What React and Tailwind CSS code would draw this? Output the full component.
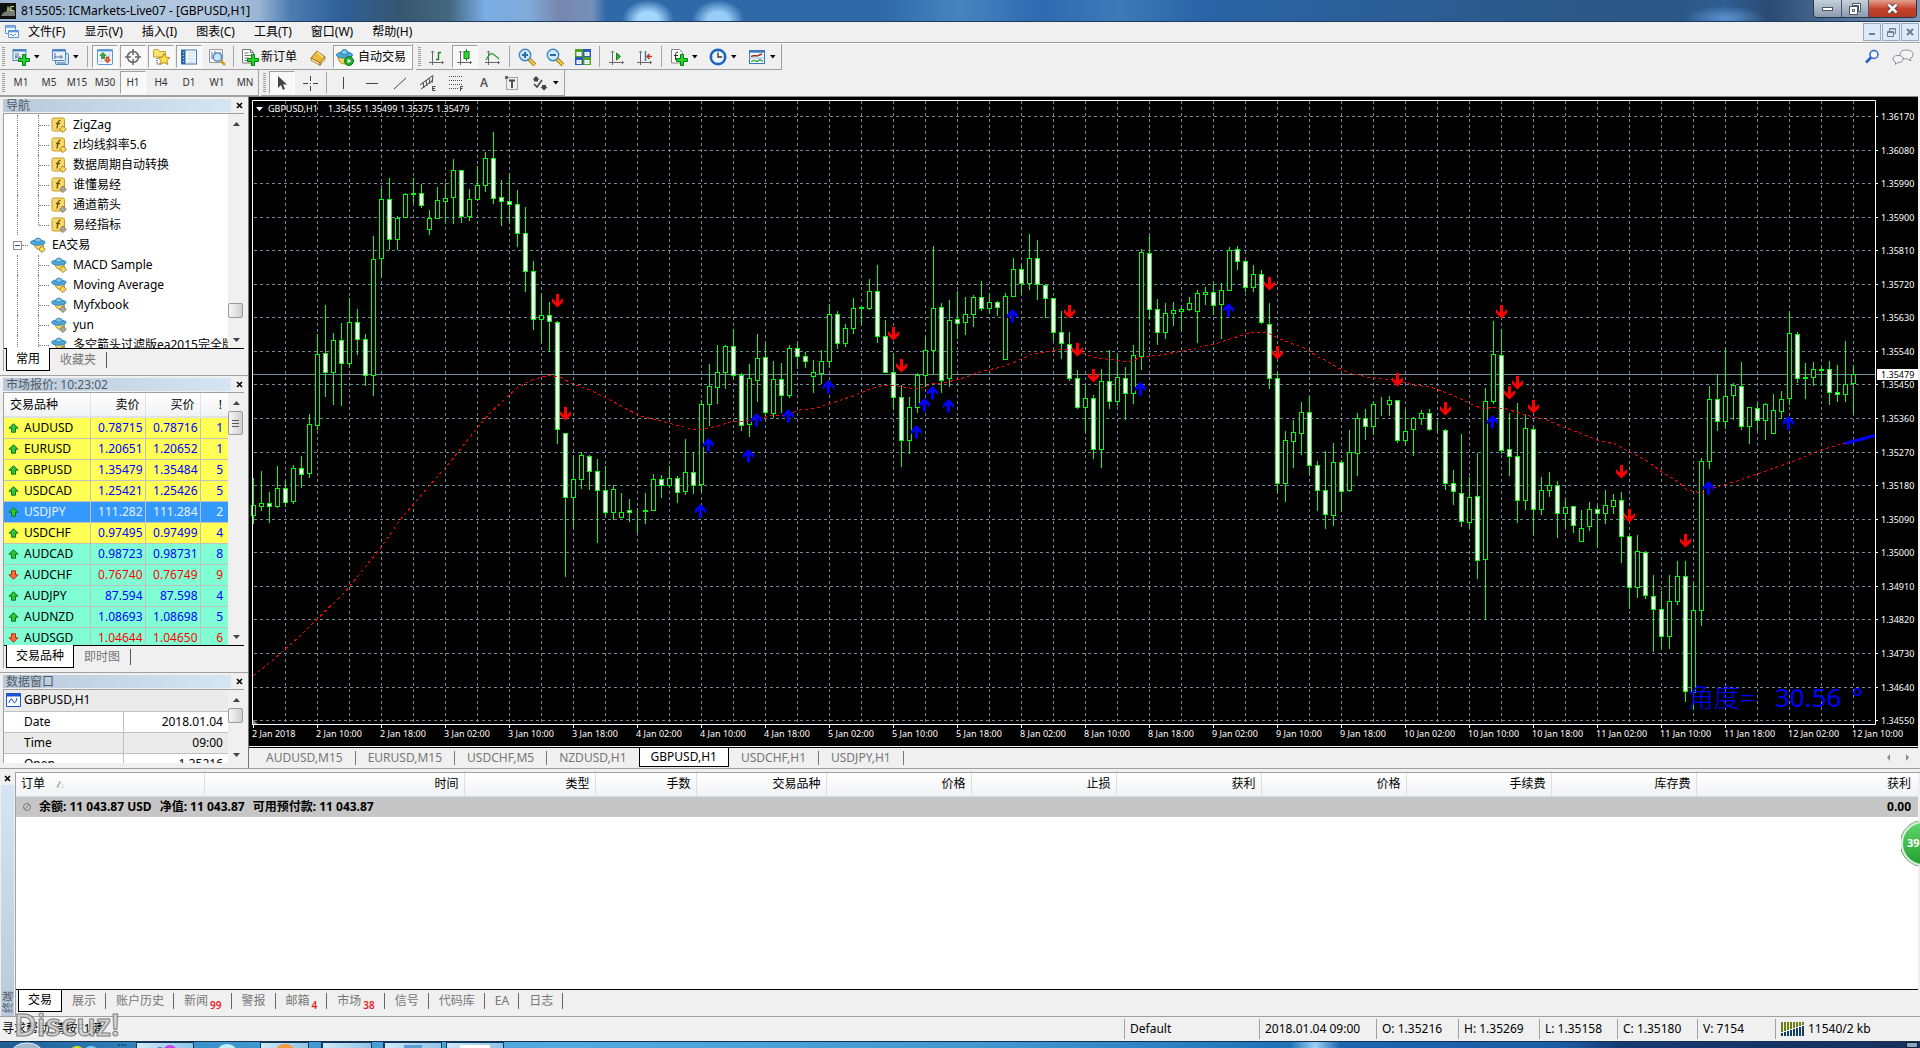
import React from 'react';

// [high, body top, body bottom, low, 1 = falling (filled) / 0 = rising (hollow)]
const candles = [
  [478,505,516,524,0],[471,503,507,511,0],[492,503,507,523,1],[466,488,507,508,0],[480,488,503,507,1],
  [465,468,502,504,0],[456,468,475,488,1],[414,424,474,478,0],[334,354,426,430,0],[305,353,373,397,1],
  [333,340,373,405,0],[323,340,364,406,1],[298,322,364,368,0],[309,322,340,355,1],[334,339,376,386,1],
  [236,259,376,396,0],[188,199,259,278,0],[178,199,240,250,1],[216,218,240,250,0],[193,194,218,218,0],
  [178,193,195,203,1],[184,193,206,208,1],[210,218,230,235,0],[187,200,219,219,0],[183,198,202,223,0],
  [159,170,198,224,0],[170,170,217,223,1],[189,199,217,221,0],[166,185,200,201,0],[152,158,186,192,0],
  [132,158,199,204,1],[180,197,202,226,1],[174,201,205,223,1],[190,204,234,247,1],[207,233,272,292,1],
  [261,271,320,330,1],[294,315,320,343,0],[302,315,322,352,1],[321,322,430,444,1],[433,433,498,577,1],
  [456,479,498,529,0],[452,455,480,489,0],[455,456,472,490,1],[459,471,491,543,1],[466,490,513,517,1],
  [485,489,513,520,0],[493,512,518,518,0],[499,510,513,522,1],[508,512,513,533,0],[493,510,512,524,1],
  [474,479,511,511,0],[475,479,486,498,1],[466,478,486,487,0],[476,478,493,503,1],[439,472,492,495,0],
  [452,472,486,494,1],[400,404,485,492,0],[364,386,405,426,0],[345,372,388,404,0],[345,346,373,389,0],
  [329,346,376,379,1],[373,375,426,431,1],[364,378,425,437,0],[334,358,381,402,0],[343,357,413,416,1],
  [361,379,414,418,0],[363,379,396,413,1],[345,348,396,398,0],[343,348,357,369,1],[352,356,362,368,1],
  [360,372,377,393,0],[350,361,374,384,0],[304,314,362,368,0],[311,314,344,349,1],[324,328,344,347,0],
  [298,308,329,334,0],[306,307,309,325,1],[279,291,309,310,0],[265,291,337,343,1],[320,336,373,373,1],
  [353,372,398,410,1],[385,397,441,467,1],[397,407,441,454,0],[373,375,408,413,0],[337,350,376,387,0],
  [246,308,351,374,0],[303,307,381,393,1],[300,320,379,387,0],[291,319,324,339,1],[297,314,323,335,0],
  [295,297,315,327,0],[281,297,309,311,1],[293,302,309,314,0],[301,302,308,316,1],[293,296,360,360,0],
  [258,269,297,297,0],[264,269,284,294,1],[234,258,284,290,0],[240,258,285,300,1],[284,285,299,318,1],
  [298,298,333,341,1],[311,332,344,359,1],[332,344,379,381,1],[370,378,408,409,1],[385,398,408,433,0],
  [395,398,450,459,1],[369,381,450,468,0],[350,381,402,409,1],[353,377,402,406,0],[367,378,394,420,1],
  [345,355,394,404,0],[249,252,357,370,0],[236,253,310,319,1],[299,309,333,345,1],[303,313,333,339,0],
  [302,310,314,326,0],[306,309,312,331,0],[297,303,310,311,0],[290,293,312,343,0],[287,292,295,305,0],
  [283,292,306,315,1],[283,290,305,339,0],[247,250,291,291,0],[246,249,262,270,1],[260,261,288,292,1],
  [265,274,288,292,0],[270,274,323,324,1],[303,324,379,389,1],[372,378,484,493,1],[431,440,484,502,0],
  [420,432,442,468,0],[402,412,434,455,0],[396,412,466,474,1],[461,465,491,511,1],[451,490,515,529,1],
  [443,462,516,526,0],[460,462,492,512,1],[430,452,491,492,0],[413,418,454,476,0],[409,418,427,440,1],
  [401,404,427,435,0],[397,405,406,416,0],[396,400,405,416,0],[400,400,441,443,1],[410,431,441,446,0],
  [417,418,430,456,0],[410,413,419,425,0],[409,413,430,431,1],[422,430,431,433,0],[429,430,484,490,1],
  [470,483,492,505,1],[434,493,522,527,1],[477,497,523,528,0],[453,496,561,579,1],[388,401,560,620,0],
  [321,354,402,404,0],[329,355,451,454,1],[413,449,457,476,1],[403,456,501,523,1],[414,428,501,510,0],
  [426,429,510,535,1],[477,490,510,515,0],[472,485,491,497,0],[481,485,514,538,1],[499,507,514,528,0],
  [506,506,526,533,1],[510,528,542,542,0],[502,509,527,531,0],[505,509,514,547,1],[490,505,514,524,0],
  [494,500,507,514,0],[492,500,537,563,1],[536,536,588,609,1],[535,551,588,598,0],[551,552,596,599,1],
  [575,596,610,652,1],[591,609,637,649,1],[575,601,637,649,0],[561,576,602,605,0],[561,576,692,702,1],
  [583,610,693,710,0],[458,461,611,626,0],[386,399,462,469,0],[374,399,422,431,1],[348,396,422,429,0],
  [383,385,396,420,0],[362,386,427,430,1],[407,407,427,444,0],[403,408,421,431,1],[403,404,421,440,0],
  [394,410,434,434,0],[391,399,412,419,0],[311,333,399,405,0],[332,334,379,383,1],[363,377,379,399,1],
  [362,369,378,386,0],[367,369,371,386,1],[361,369,393,405,1],[365,392,395,402,1],[341,384,395,402,0],
  [365,374,384,414,0],
];

const average =
  '253,676 273,660 300,636 345,592 362,571 380,549 400,520 428,487 451,461 470,437 489,414 503,401 517,388 532,380 549,375 560,377 573,384 590,390 606,398 623,407 640,416 657,420 680,426 692,429 703,429 718,426 733,421 745,421 770,416 785,415 800,410 817,408 835,402 853,396 870,389 885,385 898,386 910,388 920,388 932,384 944,383 963,378 980,372 1001,367 1015,362 1030,355 1050,351 1065,349 1078,351 1085,354 1097,358 1115,360 1127,362 1143,357 1160,355 1183,351 1200,347 1215,344 1230,339 1253,332 1268,333 1280,339 1293,344 1307,349 1316,356 1325,360 1338,368 1350,373 1367,377 1383,379 1400,381 1413,385 1430,387 1447,393 1463,400 1473,405 1484,409 1493,407 1507,409 1520,413 1530,416 1547,420 1563,427 1580,433 1597,440 1615,444 1630,452 1647,461 1662,472 1677,481 1687,490 1697,492 1704,492 1717,487 1740,480 1760,473 1777,467 1797,460 1813,453 1825,449 1845,443';

const sellArrows = [
  [557,294],[565,407],[893,327],[901,359],[1069,305],[1077,343],[1093,369],[1269,277],[1277,346],[1397,373],
  [1445,402],[1501,305],[1509,386],[1517,376],[1533,400],[1621,465],[1629,509],[1685,534],
];
const buyArrows = [
  [700,504],[708,438],[748,449],[756,413],[788,409],[828,380],[916,425],[924,398],[932,386],[948,399],
  [1012,309],[1140,382],[1228,303],[1492,415],[1708,481],[1788,416],
];

const times = [
  '2 Jan 2018', '2 Jan 10:00', '2 Jan 18:00', '3 Jan 02:00', '3 Jan 10:00', '3 Jan 18:00', '4 Jan 02:00',
  '4 Jan 10:00', '4 Jan 18:00', '5 Jan 02:00', '5 Jan 10:00', '5 Jan 18:00', '8 Jan 02:00', '8 Jan 10:00',
  '8 Jan 18:00', '9 Jan 02:00', '9 Jan 10:00', '9 Jan 18:00', '10 Jan 02:00', '10 Jan 10:00', '10 Jan 18:00',
  '11 Jan 02:00', '11 Jan 10:00', '11 Jan 18:00', '12 Jan 02:00', '12 Jan 10:00',
];

const quotes = [
  ['AUDUSD', '0.78715', '0.78716', '1', 'y', 1],
  ['EURUSD', '1.20651', '1.20652', '1', 'y', 1],
  ['GBPUSD', '1.35479', '1.35484', '5', 'y', 1],
  ['USDCAD', '1.25421', '1.25426', '5', 'y', 1],
  ['USDJPY', '111.282', '111.284', '2', 's', 1],
  ['USDCHF', '0.97495', '0.97499', '4', 'y', 1],
  ['AUDCAD', '0.98723', '0.98731', '8', 'g', 1],
  ['AUDCHF', '0.76740', '0.76749', '9', 'g', 0],
  ['AUDJPY', '87.594', '87.598', '4', 'g', 1],
  ['AUDNZD', '1.08693', '1.08698', '5', 'g', 1],
  ['AUDSGD', '1.04644', '1.04650', '6', 'g', 0],
];
const quoteBg = { y: 'bg-[#ffff55]', s: 'bg-[#3399ff]', g: 'bg-[#80ffd5]' };

/* ---------- icons ---------- */

const Svg = ({ size = 18, children }) => (
  <svg width={size} height={size} viewBox="0 0 18 18" fill="none" className="shrink-0" aria-hidden="true">
    {children}
  </svg>
);

const Plus = ({ x = 5, y = 5 }) => (
  <path
    transform={`translate(${x} ${y})`}
    d="M4.500.5h3v4h4v3h-4v4h-3v-4h-4v-3h4z"
    fill="#1fd62b"
    stroke="#0a7d12"
  />
);

const NewChartIcon = () => (
  <Svg>
    <rect x="1" y="1.500" width="13" height="11" fill="#e9f2fb" stroke="#4a86c5" />
    <path d="M1 2.500h13" stroke="#4a86c5" strokeWidth="2" />
    <path d="M4 5v6M3 9h6M6 5v3" stroke="#54779b" />
    <Plus x={6} y={6} />
  </Svg>
);
const ProfilesIcon = () => (
  <Svg>
    <rect x="4.500" y="5.500" width="13" height="11" rx="1" fill="#cfe2f5" stroke="#4a86c5" />
    <rect x="1.500" y="1.500" width="13" height="11" rx="1" fill="#e9f2fb" stroke="#4a86c5" />
    <path d="M1 2.500h14" stroke="#4a86c5" strokeWidth="2" />
    <path d="M4 5v6M3 9h9M10 7v4M6 15h9" stroke="#54779b" />
  </Svg>
);
const MarketIcon = () => (
  <Svg>
    <rect x="1.500" y="1.500" width="15" height="15" rx="1" fill="#f3f9ff" stroke="#5b9bd5" />
    <path d="M1 2.500h16" stroke="#5b9bd5" strokeWidth="2" />
    <path d="M4 6h2M11 6h4M11 8h4M3 13h4" stroke="#b9cfe4" />
    <path d="M7 4.500l3 3H8.500v3h-3v-3H4z" fill="#2fae34" stroke="#197a1d" strokeWidth=".7" />
    <path d="M11.500 15L8.500 12H10V9h3v3h1.500z" fill="#f0633a" stroke="#b33316" strokeWidth=".7" />
  </Svg>
);
const TargetIcon = () => (
  <Svg>
    <circle cx="9" cy="9" r="5.500" stroke="#666" strokeWidth="1.500" />
    <path d="M9 1v6M9 11v6M1 9h6M11 9h6" stroke="#666" strokeWidth="1.500" />
  </Svg>
);
const NavigatorIcon = () => (
  <Svg>
    <path d="M1.500 3q0-1.500 1.500-1.500h3l1.500 2h6V9h-12z" fill="#fbe278" stroke="#c9a02a" />
    <path d="M5 10v6M5 16h3" stroke="#333" strokeDasharray="1 1" />
    <path d="M12 5.500l1.800 3.700 4 .5-3 2.800.8 4-3.600-2-3.600 2 .8-4-3-2.800 4-.5z" fill="#ffe04d" stroke="#b98a14" />
  </Svg>
);
const TerminalIcon = () => (
  <Svg>
    <rect x="1.500" y="2" width="15" height="14" fill="#f4faff" stroke="#3a78b8" />
    <path d="M3.500 2v14" stroke="#2b66a8" strokeWidth="4" />
    <path d="M3.500 4v10" stroke="#b8dafc" strokeDasharray="1 2" />
    <path d="M8 5h7M8 8h7M8 11h7M8 14h7" stroke="#bcd3e8" />
  </Svg>
);
const TesterIcon = () => (
  <Svg>
    <path d="M1.500 1.500h13v13h-13z" fill="#f7f7f7" stroke="#999" />
    <path d="M4 4v7M7 3v6M12 4v6" stroke="#4e7cb0" />
    <circle cx="9.500" cy="9" r="4.200" fill="#bfe0fb" fillOpacity=".8" stroke="#4886c0" strokeWidth="1.300" />
    <path d="M12.500 12.500L17 17" stroke="#c9a02a" strokeWidth="2.500" />
  </Svg>
);
const OrderIcon = () => (
  <Svg>
    <path d="M1.500 1.500h8l3 3V15h-11z" fill="#fff" stroke="#777" />
    <path d="M9.500 1.500v3h3M3.500 5h4M3.500 7.500h7M3.500 10h4M3.500 12.500h3" stroke="#777" />
    <Plus x={6} y={6} />
  </Svg>
);
const BookIcon = () => (
  <Svg>
    <path d="M8 3l8 6-5 6-9-5z" fill="#e8b93c" stroke="#9a6b12" />
    <path d="M2 10l9 5v2.300l-9-5zM11 15l5-6v2.300l-5 6z" fill="#fff2c4" stroke="#9a6b12" strokeWidth=".8" />
    <path d="M8 4l6 5" stroke="#fbe494" strokeWidth="1.500" />
  </Svg>
);
const AutoIcon = () => (
  <Svg>
    <path d="M2 9q1 7 7 7t6-7z" fill="#f4d35e" stroke="#b88d1a" />
    <ellipse cx="8.500" cy="7" rx="8" ry="3" fill="#4fa8dc" stroke="#2a7aae" />
    <path d="M5 6q0-4.500 3.500-4.500T12 6q-3.500 1.500-7 0z" fill="#7cc5ee" stroke="#2a7aae" />
    <circle cx="13" cy="13" r="4.500" fill="#1fae2b" stroke="#0b7a17" />
    <path d="M11.700 10.700l3.600 2.300-3.600 2.300z" fill="#fff" />
  </Svg>
);
const Axes = () => (
  <path d="M4.500 3v14M1 14.500h14.500M3 4.500L4.500 3 6 4.500M14 13l1.500 1.500L14 16" stroke="#666" />
);
const BarsIcon = () => (
  <Svg>
    <Axes />
    <path d="M10.500 4v8M10.500 4.500H13M8 11.500h2.500" stroke="#15801c" strokeWidth="1.400" />
  </Svg>
);
const CandlesIcon = () => (
  <Svg>
    <Axes />
    <path d="M10.500 1v12" stroke="#15801c" />
    <rect x="8" y="3.500" width="5" height="7" fill="#2fd43a" stroke="#15801c" />
  </Svg>
);
const LineIcon = () => (
  <Svg>
    <Axes />
    <path d="M2 12Q6 4 9 6t6 5" stroke="#2c9a33" strokeWidth="1.300" />
  </Svg>
);
const ZoomIcon = ({ plus }) => (
  <Svg>
    <path d="M11 11l6 6" stroke="#a87c12" strokeWidth="4" />
    <path d="M11 11l6 6" stroke="#f3cf4e" strokeWidth="2" />
    <circle cx="7" cy="7" r="5.700" fill="#cfe9fc" stroke="#3f86c0" strokeWidth="1.400" />
    <path d={plus ? 'M7 4v6M4 7h6' : 'M4 7h6'} stroke="#2d6c9e" strokeWidth="2" />
  </Svg>
);
const TilesIcon = () => (
  <Svg>
    <path d="M1 1h8v8H1zM9 9h8v8H9z" fill="#52a11e" />
    <path d="M9 1h8v8H9zM1 9h8v8H1z" fill="#2757c9" />
    <path d="M2.500 4h5v4h-5zM10.500 4h5v4h-5zM2.500 12h5v4h-5zM10.500 12h5v4h-5z" fill="#fff" />
    <path d="M4 6h2M12 6h2M4 14h2M12 14h2" stroke="#9bb" />
  </Svg>
);
const ScrollIcon = () => (
  <Svg>
    <Axes />
    <path d="M8.500 5l4 3.500-4 3.500z" fill="#28b733" stroke="#15801c" />
  </Svg>
);
const ShiftIcon = () => (
  <Svg>
    <Axes />
    <path d="M9.500 3v10" stroke="#3b6f9c" strokeWidth="1.400" />
    <path d="M16 8.500h-5M13.500 6L11 8.500l2.500 2.500" stroke="#b5361c" strokeWidth="1.400" />
  </Svg>
);
const IndicatorIcon = () => (
  <Svg>
    <path d="M1.500 1.500h8l3 3V15h-11z" fill="#fff" stroke="#888" />
    <path d="M8 4.500Q5.500 3.500 5.500 7v5M4 7.500h4" stroke="#333" />
    <Plus x={6} y={6} />
  </Svg>
);
const ClockIcon = () => (
  <Svg>
    <circle cx="9" cy="9" r="7.300" fill="#eef6fe" stroke="#1766c2" strokeWidth="2.400" />
    <path d="M9 4.500V9h4" stroke="#333" strokeWidth="1.300" />
    <path d="M9 3v1M9 14v1M3 9h1M14 9h1" stroke="#777" />
  </Svg>
);
const TemplateIcon = () => (
  <Svg>
    <rect x="1.500" y="2.500" width="15" height="13" fill="#f4faff" stroke="#3a78b8" />
    <path d="M1 3.500h16" stroke="#3a78b8" strokeWidth="2.400" />
    <path d="M3 8.500l3-1 3 .5 5-2" stroke="#a3301c" strokeWidth="1.400" />
    <path d="M1.500 10h15" stroke="#8fb4d8" />
    <path d="M3 13.500l3-1 3 1 3-2 3 2" stroke="#2c9a33" strokeWidth="1.200" />
  </Svg>
);
const CursorIcon = () => (
  <Svg>
    <path d="M5 2v12l3-3 2 5 2-1-2-4.500h4z" fill="#444" />
  </Svg>
);
const CrossIcon = () => (
  <Svg>
    <path d="M9.500 2v5M9.500 12v5M2 9.500h5M12 9.500h5" stroke="#444" />
    <path d="M9 9h1v1H9z" fill="#444" />
  </Svg>
);
const VLineIcon = () => (
  <Svg>
    <path d="M8.500 3v12" stroke="#444" />
  </Svg>
);
const HLineIcon = () => (
  <Svg>
    <path d="M3 9.500h12" stroke="#444" />
  </Svg>
);
const TrendIcon = () => (
  <Svg>
    <path d="M3 15L15 4" stroke="#444" />
  </Svg>
);
const ChannelIcon = () => (
  <Svg>
    <path d="M1 11L13 2M2 15L14 6M4 8l1 6M7 6l1 6M10 4l1 6M14 1l-1 8" stroke="#444" />
    <path d="M16.500 12.500h-3v4h3M13.500 14.500h2.500" stroke="#444" />
  </Svg>
);
const FiboIcon = () => (
  <Svg>
    <path d="M2 2.500h14M2 6.500h14M2 10.500h14M2 14.500h9" stroke="#555" strokeDasharray="1 1" />
    <path d="M16 12.500h-2.500V17M13.500 14.500h2" stroke="#444" />
  </Svg>
);
const LabelIcon = () => (
  <Svg>
    <rect x="3.500" y="3.500" width="11" height="12" stroke="#555" strokeDasharray="1 1" />
    <path d="M2 2h3v3H2z" fill="#666" />
    <path d="M6 6.500h6M9 6.500V14" stroke="#444" strokeWidth="1.800" />
  </Svg>
);
const ShapesIcon = () => (
  <Svg>
    <path d="M5 2l3.500 3.500H7v2H3v-2H1.500zM13 16.500L9.500 13H11v-2h4v2h1.500z" fill="#444" />
    <path d="M3 10l3 3 5-7" stroke="#444" strokeWidth="1.500" />
  </Svg>
);

const ScriptIcon = ({ mark }) => (
  <svg width="16" height="16" viewBox="0 0 16 16" fill="none" className="shrink-0" aria-hidden="true">
    <rect x="1" y="1" width="12.500" height="13" rx="1.500" fill="#f7d869" stroke="#c49a2a" />
    <path d="M9.500 3.500Q7.500 3 7 6L6 11.500M5 6.500h4" stroke="#6b4e08" strokeWidth="1.300" />
    <path d="M12 9l3.300 3.300L12 15.600 8.700 12.300z" fill={mark} stroke="#7d6a3a" strokeWidth=".8" />
  </svg>
);
const ExpertIcon = ({ mark }) => (
  <svg width="16" height="16" viewBox="0 0 16 16" fill="none" className="shrink-0" aria-hidden="true">
    <path d="M4 7q0 4 5 6l4-1q1-3 0-5z" fill="#f2d56b" stroke="#a68420" strokeWidth=".8" />
    <ellipse cx="7.800" cy="5.500" rx="7.300" ry="2.700" fill="#4fa8dc" stroke="#2a7aae" strokeWidth=".8" />
    <path d="M4.500 4.500Q5 1 8 1t3.500 3.500q-3.500 1.500-7 0z" fill="#7cc5ee" stroke="#2a7aae" strokeWidth=".8" />
    <path d="M12 9l3.300 3.300L12 15.600 8.700 12.300z" fill={mark} stroke="#7d6a3a" strokeWidth=".8" />
  </svg>
);
const TickIcon = ({ up }) => (
  <svg width="11" height="10" viewBox="0 0 11 10" className="shrink-0" aria-hidden="true">
    {up ? (
      <path d="M5.500.7L10 5.200H7.500v4h-4v-4H1z" fill="#2fc43a" stroke="#14701b" />
    ) : (
      <path d="M5.500 9.300L10 4.800H7.500v-4h-4v4H1z" fill="#ff6a3d" stroke="#b3300f" />
    )}
  </svg>
);
const Arrow = () => (
  <svg width="6" height="4" viewBox="0 0 6 4" className="shrink-0" aria-hidden="true">
    <path d="M0 0h5.500L2.800 3.500z" fill="#000" />
  </svg>
);
const CloseIcon = () => (
  <svg width="7" height="7" viewBox="0 0 7 7" aria-hidden="true">
    <path d="M1 1l5 5M6 1L1 6" stroke="#000" strokeWidth="1.600" />
  </svg>
);

/* ---------- toolbar parts ---------- */

const pressedCls = 'border border-[#a0a0a0] border-b-white border-r-white bg-[#f8f8f8]';

const ToolButton = ({ label, pressed, children }) => (
  <button
    aria-label={label}
    className={`flex h-[23px] w-[26px] shrink-0 items-center justify-center text-[10px] text-[#333] ${pressed ? pressedCls : ''}`}
  >
    {children}
  </button>
);
const DropButton = ({ label, children }) => (
  <button aria-label={label} className="flex h-[23px] w-[37px] shrink-0 items-center gap-1 pl-[4px]">
    {children}
    <Arrow />
  </button>
);
const Sep = () => <span className="ml-px mr-[2px] h-[21px] w-px shrink-0 bg-[#a5a5a5]" />;
const Grip = () => (
  <span className="mr-px h-[19px] w-[3px] shrink-0 bg-[repeating-linear-gradient(180deg,#a0a0a0_0px,#a0a0a0_1px,#f0f0f0_1px,#f0f0f0_2px)]" />
);
const Group = ({ children }) => (
  <div className="flex items-center gap-[2px] border-b border-r border-[#a0a0a0] pl-[2px]">{children}</div>
);

const menus = ['文件(F)', '显示(V)', '插入(I)', '图表(C)', '工具(T)', '窗口(W)', '帮助(H)'];
const frames = ['M1', 'M5', 'M15', 'M30', 'H1', 'H4', 'D1', 'W1', 'MN'];

const TitleBar = () => (
  <header className="relative flex h-[22px] shrink-0 items-center gap-[5px] border-b border-[#1d3a5f] bg-[radial-gradient(26px_20px_at_648px_20px,#a5d6fd_40%,transparent),radial-gradient(26px_20px_at_718px_20px,#98cdf8_40%,transparent),radial-gradient(40px_12px_at_1725px_18px,#5b93cf,transparent),linear-gradient(90deg,#9db6d2_0px,#b4c9e0_200px,#9ab5d4_258px,#4d7cb0_290px,#2f6099_340px,#36566f_400px,#45687f_450px,#7aaee4_485px,#7fa9d8_530px,#7886ae_560px,#7690b8_592px,#2f69a8_606px,#2f69a8_880px,#4684bf_960px,#2d6ab0_1040px,#3d7ab8_1120px,#2a64a6_1200px,#2c5a8c_1500px,#2b5686_1670px,#2f5d90_1725px,#2a4b73_1770px,#4d6c90_1830px,#7f98b5_1920px)]">
    <svg width="16" height="16" viewBox="0 0 16 16" aria-hidden="true">
      <rect width="16" height="16" fill="#111" />
      <path d="M1 13q3-5 5-4 2-5 4-5l1 3 4 1v5z" fill="#777c74" />
      <path d="M8 3.500v4M14 3.500h-3v4h3" stroke="#b7e07a" strokeWidth="1.200" fill="none" />
    </svg>
    <h1 className="text-[12px] leading-5 text-black">815505: ICMarkets-Live07 - [GBPUSD,H1]</h1>
    <div className="ml-auto mr-[3px] flex h-[18px] self-start overflow-hidden rounded-b-[4px] border border-t-0 border-[#26364a]">
      <button aria-label="最小化" className="flex w-[28px] items-center justify-center border-r border-[#44546a] bg-gradient-to-b from-[#c6d0dc] to-[#8b9bb0]">
        <span className="h-[4px] w-[11px] border border-[#4a5462] bg-white" />
      </button>
      <button aria-label="还原" className="flex w-[27px] items-center justify-center border-r border-[#44546a] bg-gradient-to-b from-[#c6d0dc] to-[#8b9bb0]">
        <svg width="12" height="12" viewBox="0 0 12 12" fill="none" aria-hidden="true">
          <path d="M3.500.5h8v8h-2v-6h-6z" fill="#fff" stroke="#4a5462" />
          <path d="M.5 3.500h8v8h-8z" fill="#fff" stroke="#4a5462" />
          <path d="M3.500 6.500h2v2h-2z" stroke="#4a5462" />
        </svg>
      </button>
      <button aria-label="关闭" className="flex w-[47px] items-center justify-center bg-gradient-to-b from-[#e0a191] via-[#c8432b] to-[#b23a24]">
        <svg width="13" height="11" viewBox="0 0 13 11" aria-hidden="true">
          <path d="M2.500 1.500l8 8M10.500 1.500l-8 8" stroke="#54403f" strokeWidth="4.500" />
          <path d="M2.500 1.500l8 8M10.500 1.500l-8 8" stroke="#fff" strokeWidth="2.500" />
        </svg>
      </button>
    </div>
  </header>
);

const mdiCls = 'flex h-[18px] w-[18px] items-center justify-center border border-[#98aabd] bg-[#ddeaf7]';

const MenuBar = () => (
  <nav className="flex h-[21px] shrink-0 items-center border-b border-[#a0a0a0] pl-1">
    <svg width="16" height="16" viewBox="0 0 16 16" fill="none" aria-hidden="true">
      <path d="M1.500 1.500h10v8h-10z" fill="#f2f8ff" stroke="#5d97d6" />
      <path d="M4.500 6.500h10v7h-10z" fill="#f2f8ff" stroke="#5d97d6" />
      <path d="M1.500 3h10M4.500 7.500h10" stroke="#5d97d6" strokeWidth="1.500" />
      <path d="M6 11q1-2 2 0t2 0 2 0" stroke="#5d97d6" />
    </svg>
    {menus.map((menu) => (
      <button key={menu} className="ml-[8px] mr-[11px] text-[12px] leading-5">
        {menu}
      </button>
    ))}
    <div className="ml-auto mr-px flex gap-px">
      <button aria-label="最小化窗口" className={mdiCls}>
        <span className="mt-1 h-[2px] w-[6px] bg-[#6c7f93]" />
      </button>
      <button aria-label="还原窗口" className={mdiCls}>
        <svg width="9" height="9" viewBox="0 0 9 9" fill="none" stroke="#6c7f93" aria-hidden="true">
          <path d="M2.500 3V.5h6v5H6.500M2.500 1h6M.5 3.500h6v5h-6zM.5 4.500h6" />
        </svg>
      </button>
      <button aria-label="关闭窗口" className={mdiCls}>
        <svg width="8" height="8" viewBox="0 0 8 8" aria-hidden="true">
          <path d="M1 1l6 6M7 1L1 7" stroke="#6c7f93" strokeWidth="2" />
        </svg>
      </button>
    </div>
  </nav>
);

const Toolbars = () => (
  <div className="flex shrink-0 justify-between border-t border-white">
    <div>
      <div className="flex h-[26px]">
        <Group>
          <Grip />
          <DropButton label="新图表"><NewChartIcon /></DropButton>
          <DropButton label="配置文件"><ProfilesIcon /></DropButton>
          <Sep />
          <ToolButton label="市场报价" pressed><MarketIcon /></ToolButton>
          <ToolButton label="数据窗口" pressed><TargetIcon /></ToolButton>
          <ToolButton label="导航" pressed><NavigatorIcon /></ToolButton>
          <ToolButton label="终端" pressed><TerminalIcon /></ToolButton>
          <ToolButton label="策略测试"><TesterIcon /></ToolButton>
          <Sep />
          <button className="flex h-[23px] w-[65px] items-center gap-[2px] pl-[3px] text-[12px] whitespace-nowrap">
            <OrderIcon />
            新订单
          </button>
          <ToolButton label="MetaEditor"><BookIcon /></ToolButton>
          <button className={`flex h-[23px] w-[79px] items-center gap-1 pl-[2px] text-[12px] whitespace-nowrap ${pressedCls}`}>
            <AutoIcon />
            自动交易
          </button>
        </Group>
        <div className="ml-[3px] flex">
          <Group>
            <Grip />
            <ToolButton label="柱状图"><BarsIcon /></ToolButton>
            <ToolButton label="蜡烛图" pressed><CandlesIcon /></ToolButton>
            <ToolButton label="折线图"><LineIcon /></ToolButton>
            <Sep />
            <ToolButton label="放大"><ZoomIcon plus /></ToolButton>
            <ToolButton label="缩小"><ZoomIcon /></ToolButton>
            <ToolButton label="平铺窗口"><TilesIcon /></ToolButton>
            <Sep />
            <ToolButton label="自动滚动"><ScrollIcon /></ToolButton>
            <ToolButton label="图表平移"><ShiftIcon /></ToolButton>
            <Sep />
            <DropButton label="指标"><IndicatorIcon /></DropButton>
            <DropButton label="周期"><ClockIcon /></DropButton>
            <DropButton label="模板"><TemplateIcon /></DropButton>
          </Group>
        </div>
      </div>
      <div className="flex h-[26px]">
        <Group>
          <Grip />
          {frames.map((frame) => (
            <ToolButton key={frame} label={frame} pressed={frame === 'H1'}>{frame}</ToolButton>
          ))}
        </Group>
        <div className="ml-[2px] flex">
          <Group>
            <Grip />
            <ToolButton label="光标" pressed><CursorIcon /></ToolButton>
            <ToolButton label="十字准线"><CrossIcon /></ToolButton>
            <Sep />
            <ToolButton label="垂直线"><VLineIcon /></ToolButton>
            <ToolButton label="水平线"><HLineIcon /></ToolButton>
            <ToolButton label="趋势线"><TrendIcon /></ToolButton>
            <ToolButton label="等距通道"><ChannelIcon /></ToolButton>
            <ToolButton label="斐波那契"><FiboIcon /></ToolButton>
            <ToolButton label="文字"><span className="text-[12px] font-semibold text-[#555]">A</span></ToolButton>
            <ToolButton label="文字标签"><LabelIcon /></ToolButton>
            <DropButton label="箭头"><ShapesIcon /></DropButton>
          </Group>
        </div>
      </div>
    </div>
    <div className="flex gap-[12px] pr-[6px] pt-[4px]">
      <button aria-label="搜索" className="h-[18px]">
        <svg width="16" height="16" viewBox="0 0 16 16" fill="none" aria-hidden="true">
          <circle cx="10" cy="5.500" r="4" stroke="#2a62c4" strokeWidth="1.500" fill="#f4f9ff" />
          <path d="M7 8.500L2 13.500" stroke="#2a62c4" strokeWidth="2.800" />
        </svg>
      </button>
      <button aria-label="聊天" className="h-[18px]">
        <svg width="22" height="17" viewBox="0 0 22 17" fill="#f4f4f8" stroke="#8d8d95" aria-hidden="true">
          <path d="M14.500 1q6.500 0 6.500 4.500 0 3-3 4l1 2.500-3.500-2q-7 0-7.500-4.500Q8 1 14.500 1z" />
          <path d="M6 6.500q5 0 5 3.500t-5 3.500l-2.500 2v-2.500Q1 12 1 10q0-3.500 5-3.500z" />
        </svg>
      </button>
    </div>
  </div>
);

/* ---------- docked panels ---------- */

const Panel = ({ title, children }) => (
  <section className="border-t border-[#a0a0a0] pb-1 pl-[3px] pr-[4px] pt-[2px]">
    <div className="flex h-[14px] items-start">
      <h2 className="h-[13px] w-[228px] bg-gradient-to-r from-[#b9c9da] to-[#d6e5f3] pl-[3px] text-[12px] leading-[13px] text-[#4f5a66]">{title}</h2>
      <button aria-label={`关闭${title}`} className="ml-[5px] mt-[3px]"><CloseIcon /></button>
    </div>
    <div className="border-l border-t border-[#a0a0a0]">{children}</div>
  </section>
);

const ScrollBar = ({ thumb }) => (
  <div className="flex w-[16px] shrink-0 flex-col items-center bg-[#f0f0f0]">
    <svg width="7" height="20" viewBox="0 0 7 20" aria-hidden="true"><path d="M0 12l3.500-4L7 12z" fill="#444" /></svg>
    <div className="relative w-full flex-1">
      <div className={`absolute left-0 flex w-[15px] flex-col items-center justify-center gap-[2px] rounded-[2px] border border-[#999] bg-gradient-to-r from-[#f6f6f6] to-[#cfcfcf] ${thumb}`}>
        {thumb.includes('h-[24px]') && [0, 1, 2].map((i) => <span key={i} className="h-px w-[7px] bg-[#555]" />)}
      </div>
    </div>
    <svg width="7" height="14" viewBox="0 0 7 14" aria-hidden="true"><path d="M0 4l3.500 4L7 4z" fill="#444" /></svg>
  </div>
);

const PanelTabs = ({ active, other }) => (
  <div className="flex h-[23px] items-center border-t border-black">
    <button className="-mt-px ml-[2px] h-[23px] border border-t-0 border-black bg-white px-[9px] text-[12px] leading-5">{active}</button>
    <button className="px-[10px] text-[12px] leading-5 text-[#777]">{other}</button>
    <span className="h-[16px] w-px bg-[#555]" />
  </div>
);

const gold = '#ffd84d';
const grey = '#a8a8a8';
const scripts = [['ZigZag', gold], ['zl均线斜率5.6', gold], ['数据周期自动转换', gold], ['谁懂易经', grey], ['通道箭头', grey], ['易经指标', grey]];
const experts = [['MACD Sample', gold], ['Moving Average', gold], ['Myfxbook', grey], ['yun', grey], ['多空箭头过滤版ea2015完全版', grey]];

const TreeItem = ({ name, last, children }) => (
  <li className="flex h-5 items-center whitespace-nowrap text-[12px] leading-5">
    <span className="h-full w-[14px] shrink-0 border-r border-dotted border-[#777]" />
    <span className={`w-[21px] shrink-0 self-start border-r border-dotted border-[#777] ${last ? 'h-[10px]' : 'h-full'}`} />
    <span className="mr-[2px] w-[10px] shrink-0 border-t border-dotted border-[#777]" />
    {children}
    <span className="ml-[6px]">{name}</span>
  </li>
);

const Navigator = () => (
  <Panel title="导航">
    <div className="flex h-[234px] bg-white">
      <ul className="flex-1 overflow-hidden pt-px">
        {scripts.map(([name, mark], i) => (
          <TreeItem key={name} name={name} last={i === 5}><ScriptIcon mark={mark} /></TreeItem>
        ))}
        <li className="flex h-5 items-center text-[12px] leading-5">
          <span className="ml-[9px] flex h-[9px] w-[9px] items-center justify-center border border-[#919191] bg-white">
            <span className="h-px w-[5px] bg-[#2a4a9a]" />
          </span>
          <span className="mr-[2px] w-[6px] border-t border-dotted border-[#777]" />
          <ExpertIcon mark={gold} />
          <span className="ml-[6px]">EA交易</span>
        </li>
        {experts.map(([name, mark]) => (
          <TreeItem key={name} name={name}><ExpertIcon mark={mark} /></TreeItem>
        ))}
      </ul>
      <ScrollBar thumb="bottom-[16px] h-[15px]" />
    </div>
    <PanelTabs active="常用" other="收藏夹" />
  </Panel>
);

const MarketWatch = () => (
  <Panel title="市场报价: 10:23:02">
    <div className="flex h-[252px] bg-white">
      <div className="flex-1 overflow-hidden">
        <table className="w-full table-fixed border-collapse text-[12px]">
          <colgroup>
            <col />
            <col className="w-[55px]" />
            <col className="w-[55px]" />
            <col className="w-[28px]" />
          </colgroup>
          <thead>
            <tr className="h-[24px] bg-gradient-to-b from-white to-[#f1f2f4]">
              <th className="border-b-2 border-r border-[#e0e2e5] py-0 pl-[6px] text-left font-normal">交易品种</th>
              <th className="border-b-2 border-r border-[#e0e2e5] py-0 pr-[5px] text-right font-normal">卖价</th>
              <th className="border-b-2 border-r border-[#e0e2e5] py-0 pr-[5px] text-right font-normal">买价</th>
              <th className="border-b-2 border-[#e0e2e5] py-0 pr-[6px] text-right font-normal">!</th>
            </tr>
          </thead>
          <tbody>
            {quotes.map(([symbol, bid, ask, spread, tone, up]) => {
              const ink = tone === 's' ? 'text-[#e8f3ff]' : up ? 'text-[#0000ff]' : 'text-[#ff0000]';
              return (
                <tr key={symbol} className={`h-[21px] ${quoteBg[tone]} ${ink}`}>
                  <td className={`border-b border-r border-[#c0c0c0] p-0 leading-5 ${tone === 's' ? '' : 'text-black'}`}>
                    <span className="flex items-center gap-[5px] pl-1"><TickIcon up={up} />{symbol}</span>
                  </td>
                  <td className="border-b border-r border-[#c0c0c0] py-0 pr-[2px] text-right leading-5">{bid}</td>
                  <td className="border-b border-r border-[#c0c0c0] py-0 pr-[2px] text-right leading-5">{ask}</td>
                  <td className="border-b border-[#c0c0c0] py-0 pr-[5px] text-right leading-5">{spread}</td>
                </tr>
              );
            })}
          </tbody>
        </table>
      </div>
      <ScrollBar thumb="-top-[2px] h-[24px]" />
    </div>
    <PanelTabs active="交易品种" other="即时图" />
  </Panel>
);

const dataRows = [['Date', '2018.01.04'], ['Time', '09:00'], ['Open', '1.35216']];

const DataWindow = () => (
  <Panel title="数据窗口">
    <div className="flex h-[73px] bg-white">
      <div className="flex-1 overflow-hidden">
        <table className="w-full table-fixed border-collapse text-[12px]">
          <colgroup>
            <col className="w-[119px]" />
            <col />
          </colgroup>
          <tbody>
            <tr className="h-[21px] bg-[#ebebeb]">
              <th colSpan="2" className="border-b border-[#c0c0c0] p-0 text-left font-normal leading-5">
                <span className="flex items-center gap-[3px] pl-[2px]">
                  <svg width="15" height="14" viewBox="0 0 15 14" fill="none" aria-hidden="true">
                    <path d="M.5.5h14v13H.5z" fill="#fff" stroke="#1c53cf" />
                    <path d="M0 2h15" stroke="#1c53cf" strokeWidth="3" />
                    <path d="M3 10q2-7 4-2t4-3" stroke="#1c53cf" />
                  </svg>
                  GBPUSD,H1
                </span>
              </th>
            </tr>
            {dataRows.map(([name, value], i) => (
              <tr key={name} className={`h-[21px] ${i === 1 ? 'bg-[#ebebeb]' : ''}`}>
                <td className="border-b border-r border-[#c0c0c0] py-0 pl-[20px] leading-5">{name}</td>
                <td className="border-b border-[#c0c0c0] py-0 pr-[5px] text-right leading-5">{value}</td>
              </tr>
            ))}
          </tbody>
        </table>
      </div>
      <ScrollBar thumb="-top-[2px] h-[15px]" />
    </div>
  </Panel>
);

/* ---------- chart ---------- */

const Chart = () => {
  const rows = Array.from({ length: 19 }, (_, i) => ({
    y: Math.floor(116.5 + i * 33.56) + 0.5,
    price: (1.3617 - i * 0.0009).toFixed(5),
  }));
  const cols = Array.from({ length: 50 }, (_, i) => 285.5 + i * 32);

  return (
    <svg viewBox="249 97 1669 649" className="block w-full bg-black" role="img" aria-label="GBPUSD,H1">
      <g stroke="#778899" strokeDasharray="3 3">
        {rows.map(({ y, price }) => <line key={price} x1="254" x2="1872" y1={y} y2={y} />)}
        {cols.map((x) => <line key={x} x1={x} x2={x} y1="101" y2="724" />)}
      </g>
      <path d="M252 374.500h1623" stroke="#778899" />
      <path d="M252 719l6 5h-6z" fill="#778899" />

      <g stroke="#00ff00">
        {candles.map(([high, top, bottom, low, falling], i) => {
          const x = 253.5 + i * 8;
          return (
            <g key={i}>
              <path d={`M${x} ${high}V${low}`} />
              <rect x={x - 2} y={top + 0.5} width="4" height={Math.max(bottom - top - 1, 0)} fill={falling ? '#fff' : '#000'} />
            </g>
          );
        })}
      </g>

      <polyline points={average} fill="none" stroke="#ff0000" strokeDasharray="3 3" shapeRendering="crispEdges" />
      <path d="M1845 443.500l30-8" stroke="#0000ff" strokeWidth="3" />

      <g fill="#ff0000">
        {sellArrows.map(([x, y]) => (
          <path key={`${x}-${y}`} transform={`translate(${x + 0.5} ${y})`} d="M-1.500 0h3v8L5.500 4v4L0 13.500-5.500 8V4l4 4z" />
        ))}
      </g>
      <g fill="#0000ff">
        {buyArrows.map(([x, y]) => (
          <path key={`${x}-${y}`} transform={`translate(${x + 0.5} ${y})`} d="M-1.500 13.500h3v-8l4 4v-4L0 0l-5.500 5.500v4l4-4z" />
        ))}
      </g>

      <path d="M252.500 724V100.500H1875.500V724.500H252" fill="none" stroke="#fff" />
      <g stroke="#fff">
        {rows.map(({ y, price }) => <path key={price} d={`M1876 ${y}h2`} />)}
        {times.map((time, i) => <path key={time} d={`M${253.5 + i * 64} 725v3`} />)}
      </g>

      <g fill="#fff" fontSize="9">
        {rows.map(({ y, price }) => <text key={price} x="1881" y={y + 3.5}>{price}</text>)}
        {times.map((time, i) => <text key={time} x={252 + i * 64} y="737">{time}</text>)}
        <path d="M256 107h7l-3.500 4z" />
        <text x="268" y="112">GBPUSD,H1</text>
        <text x="328" y="112">1.35455</text>
        <text x="364" y="112">1.35499</text>
        <text x="400" y="112">1.35375</text>
        <text x="436" y="112">1.35479</text>
      </g>
      <path d="M1877 369h41v11h-41z" fill="#fff" />
      <text x="1881" y="378" fontSize="9" fill="#000">1.35479</text>
      <g fontSize="26" fill="#0000ff">
        <text x="1688" y="707" fontWeight="300">角度=</text>
        <text x="1775" y="707">30.56</text>
        <text x="1852" y="707">°</text>
      </g>
    </svg>
  );
};

const chartTabs = ['AUDUSD,M15', 'EURUSD,M15', 'USDCHF,M5', 'NZDUSD,H1', 'GBPUSD,H1', 'USDCHF,H1', 'USDJPY,H1'];

const ChartArea = () => (
  <main className="flex min-w-0 flex-1 flex-col border-l border-[#777] pr-[2px]">
    <div className="border-t border-[#888]"><Chart /></div>
    <div className="mt-px flex flex-1 items-center border-t border-black pl-[5px] text-[12px] leading-5">
      {chartTabs.map((tab, i) =>
        tab === 'GBPUSD,H1' ? (
          <button key={tab} className="-mt-px h-[19px] border border-t-0 border-black bg-white px-[11px] leading-[18px]">{tab}</button>
        ) : (
          <React.Fragment key={tab}>
            <button className="px-[12px] text-[#777]">{tab}</button>
            {i !== 3 && <span className="h-[14px] w-px bg-[#777]" />}
          </React.Fragment>
        )
      )}
      <svg width="24" height="8" viewBox="0 0 24 8" className="ml-auto mr-2" aria-hidden="true">
        <path d="M4 0v7L1 3.500zM20 0v7l3-3.500z" fill="#888" />
      </svg>
    </div>
  </main>
);

/* ---------- terminal ---------- */

const orderCols = ['时间', '类型', '手数', '交易品种', '价格', '止损', '获利', '价格', '手续费', '库存费', '获利'];
const orderWidths = ['w-[260px]', 'w-[131px]', 'w-[101px]', 'w-[130px]', 'w-[145px]', 'w-[145px]', 'w-[145px]', 'w-[145px]', 'w-[145px]', 'w-[145px]', ''];

const terminalTabs = [
  ['展示'], ['账户历史'], ['新闻', '99'], ['警报'], ['邮箱', '4'], ['市场', '38'], ['信号'], ['代码库'], ['EA'], ['日志'],
];

const Terminal = () => (
  <section className="relative flex min-h-0 flex-1 border-t border-[#a0a0a0] pt-[3px]">
    <div className="flex w-[15px] shrink-0 flex-col items-center pr-px">
      <button aria-label="关闭终端" className="flex h-[13px] items-center"><CloseIcon /></button>
      <div className="flex w-[13px] flex-1 items-end justify-center bg-gradient-to-t from-[#b9c9da] to-[#d6e5f3] pb-[3px]">
        <span className="rotate-180 text-[11px] leading-[13px] text-[#4f5a66] [text-orientation:sideways] [writing-mode:vertical-rl]">终端</span>
      </div>
    </div>
    <div className="flex min-w-0 flex-1 flex-col border-l border-t border-[#a0a0a0] pr-[2px]">
      <div className="flex-1 bg-white">
        <table className="w-full table-fixed border-collapse text-[12px]">
          <thead>
            <tr className="h-[23px] bg-gradient-to-b from-white to-[#f1f2f4]">
              <th className="w-[188px] border-b border-r border-[#dcdee2] py-0 pl-[5px] text-left font-normal">
                <span className="flex items-center gap-[11px]">
                  订单
                  <svg width="9" height="8" viewBox="0 0 9 8" fill="none" aria-hidden="true">
                    <path d="M1 7.500L4.500 1" stroke="#777" />
                    <path d="M4.500 1L8 7.500H1" stroke="#ddd" />
                  </svg>
                </span>
              </th>
              {orderCols.map((name, i) => (
                <th key={i} className={`border-b border-[#dcdee2] py-0 text-right font-normal ${i < 10 ? 'border-r pr-[5px]' : 'pr-[7px]'} ${orderWidths[i]}`}>{name}</th>
              ))}
            </tr>
          </thead>
          <tbody>
            <tr className="h-[21px] bg-[#c6c6c6] font-bold">
              <td colSpan="11" className="p-0">
                <span className="flex items-center gap-[8px] whitespace-pre pl-[7px]">
                  <svg width="8" height="8" viewBox="0 0 8 8" fill="#c9c9c9" stroke="#777" aria-hidden="true">
                    <circle cx="4" cy="4" r="3.500" />
                    <path d="M2 6l4-4" />
                  </svg>
                  <span>余额: 11 043.87 USD</span>
                  <span>净值: 11 043.87</span>
                  <span>可用预付款: 11 043.87</span>
                </span>
              </td>
              <td className="py-0 pr-[7px] text-right">0.00</td>
            </tr>
          </tbody>
        </table>
      </div>
      <div className="mb-[4px] flex h-[23px] shrink-0 items-center border-t border-black text-[12px] leading-5">
        <button className="-mt-px ml-[2px] h-[22px] border border-t-0 border-black bg-white px-[9px]">交易</button>
        {terminalTabs.map(([name, count]) => (
          <React.Fragment key={name}>
            <button className="flex items-end pl-[10px] pr-[9px] text-[#777]">
              {name}
              {count && <span className="-mb-1 ml-[2px] text-[10px] font-semibold text-[#e81c1c]">{count}</span>}
            </button>
            <span className="h-[16px] w-px bg-[#666]" />
          </React.Fragment>
        ))}
      </div>
    </div>
    <div className="pointer-events-none absolute right-0 top-[52px] h-[45px] w-[19px] overflow-hidden">
      <div className="flex h-[45px] w-[45px] items-center rounded-full border-2 border-[#d8efd8] bg-gradient-to-b from-[#5fd66c] to-[#1fa02f] pl-1 text-[11px] font-bold text-white shadow-[0_0_0_1px_#6b9a6e]">39</div>
    </div>
  </section>
);

const statusCells = [
  ['Default', 'w-[135px]'], ['2018.01.04 09:00', 'w-[117px]'], ['O: 1.35216', 'w-[82px]'], ['H: 1.35269', 'w-[81px]'],
  ['L: 1.35158', 'w-[78px]'], ['C: 1.35180', 'w-[80px]'], ['V: 7154', 'w-[78px]'],
];

const StatusBar = () => (
  <footer className="relative flex h-[25px] shrink-0 items-center border-t border-[#a0a0a0] text-[12px] leading-5">
    <span className="flex-1 pl-[2px]">寻求帮助,请按F1键</span>
    {statusCells.map(([text, width]) => (
      <span key={text} className={`h-[20px] shrink-0 whitespace-nowrap border-l border-[#a0a0a0] pl-[5px] ${width}`}>{text}</span>
    ))}
    <span className="flex h-[20px] w-[145px] shrink-0 items-center gap-1 border-l border-[#a0a0a0] pl-[5px]">
      <svg width="23" height="14" viewBox="0 0 23 14" aria-hidden="true">
        {[0, 1, 2, 3, 4, 5, 6, 7].map((i) => (
          <g key={i}>
            <path d={`M${i * 3} 0h2v${10 - i}h-2z`} fill="#6b8012" />
            <path d={`M${i * 3} ${11 - i}h2V14h-2z`} fill="#12405e" />
          </g>
        ))}
      </svg>
      11540/2 kb
    </span>
    <span className="pointer-events-none absolute -top-[10px] left-[14px] text-[31px] font-semibold leading-[34px] text-[#d0d0d0]/90 [-webkit-text-stroke:1px_#7d7d7d]">Discuz!</span>
  </footer>
);

const taskCls = 'h-full border border-b-0 border-[#123a5c] bg-gradient-to-r from-[#cfe8f8] to-[#8fc4e6]';

const TaskBar = () => (
  <div className="flex h-[7px] shrink-0 overflow-hidden border-t border-[#17324f] bg-[linear-gradient(90deg,#1d5d96_0px,#3a92cc_200px,#55abdf_560px,#3f97d2_1000px,#1d72b8_1290px,#9cd0f5_1315px,#1b66b0_1340px,#1c5ca6_1560px,#143a73_1620px,#16305c_1920px)]">
    <svg width="136" height="7" viewBox="0 0 136 7" aria-hidden="true">
      <ellipse cx="27" cy="10" rx="15" ry="9" fill="#9fb9cf" stroke="#eef" />
      <ellipse cx="77" cy="8" rx="6" ry="4" fill="#c9e010" />
      <ellipse cx="91" cy="8" rx="6" ry="4" fill="#7ec8f5" />
      <path d="M118 3h8" stroke="#0b2a45" strokeDasharray="2 1" />
    </svg>
    <div className={`w-[58px] ${taskCls}`}>
      <svg width="56" height="6" viewBox="0 0 56 6" aria-hidden="true"><circle cx="33" cy="9" r="7" fill="#c642e8" /><circle cx="23" cy="9" r="5" fill="#4a7be8" /></svg>
    </div>
    <div className="w-[66px]">
      <svg width="66" height="6" viewBox="0 0 66 6" aria-hidden="true"><circle cx="33" cy="13" r="11" fill="#bdf0ff" /></svg>
    </div>
    <div className={`w-[49px] ${taskCls}`}>
      <svg width="47" height="6" viewBox="0 0 47 6" aria-hidden="true"><circle cx="24" cy="12" r="11" fill="#f79a3e" /></svg>
    </div>
    <div className="w-[13px] border-r border-[#123a5c]" />
    <div className={`w-[50px] ${taskCls}`} />
    <div className="w-[12px] border-r border-[#123a5c]" />
    <div className={`w-[58px] ${taskCls}`}><div className="mx-auto mt-[2px] h-1 w-[18px] bg-[#5d9fd4]" /></div>
    <div className={`ml-1 w-[58px] ${taskCls}`}><div className="mx-auto mt-[2px] h-1 w-[30px] bg-white" /></div>
    <div className="ml-auto mr-[2px] w-[12px] border border-[#0d2038] bg-[#8fa2bb]" />
  </div>
);

export default function App() {
  return (
    <div className="flex h-screen min-h-[900px] flex-col overflow-hidden bg-[#f0f0f0] font-['Noto_Sans','Noto_Sans_CJK_SC',sans-serif] text-[12px] text-black">
      <TitleBar />
      <MenuBar />
      <Toolbars />
      <div className="flex shrink-0">
        <aside className="w-[248px] shrink-0">
          <Navigator />
          <MarketWatch />
          <DataWindow />
        </aside>
        <ChartArea />
      </div>
      <Terminal />
      <StatusBar />
      <TaskBar />
    </div>
  );
}
